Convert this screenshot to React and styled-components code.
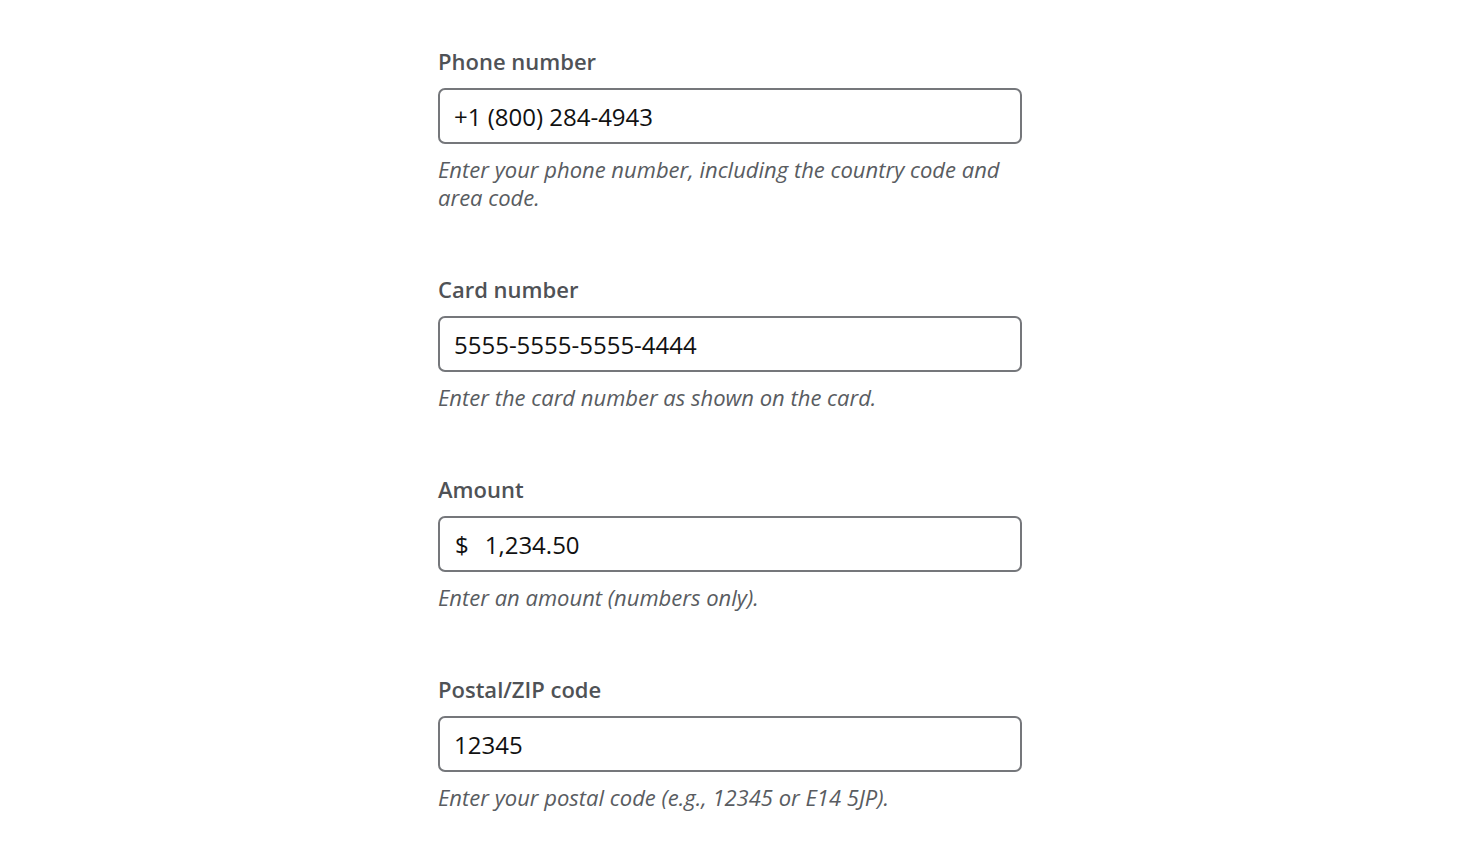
import React from "react";
import styled, { createGlobalStyle } from "styled-components";

const Global = createGlobalStyle`
  html, body { margin: 0; padding: 0; background: #ffffff; }
  body { font-family: "Open Sans", "Liberation Sans", sans-serif; }
  * { box-sizing: border-box; }
`;

const Page = styled.div`
  display: flex;
  justify-content: center;
  padding-top: 47px;
`;

const Form = styled.form`
  width: 584px;
  display: flex;
  flex-direction: column;
  gap: 64px;
`;

const Field = styled.div`
  display: flex;
  flex-direction: column;
`;

const Label = styled.label`
  font-size: 22px;
  line-height: 28px;
  font-weight: 600;
  color: #4f5256;
  margin-bottom: 13px;
`;

const InputBox = styled.div`
  display: flex;
  align-items: center;
  height: 56px;
  border: 2px solid #75777b;
  border-radius: 7px;
  padding: 0 14px;
  background: #fff;
`;

const Prefix = styled.span`
  font-size: 24px;
  color: #111;
  margin-right: 16px;
  padding-left: 1px;
`;

const Input = styled.input`
  flex: 1;
  border: none;
  outline: none;
  padding: 0;
  font-family: inherit;
  font-size: 24px;
  color: #111;
  background: transparent;
`;

const Hint = styled.p`
  margin: 11px 0 0;
  font-size: 22px;
  line-height: 28px;
  font-style: italic;
  color: #595c61;
`;

const fields = [
  { label: "Phone number", value: "+1 (800) 284-4943", hint: "Enter your phone number, including the country code and area code." },
  { label: "Card number", value: "5555-5555-5555-4444", hint: "Enter the card number as shown on the card." },
  { label: "Amount", value: "1,234.50", prefix: "$", hint: "Enter an amount (numbers only)." },
  { label: "Postal/ZIP code", value: "12345", hint: "Enter your postal code (e.g., 12345 or E14 5JP)." },
];

export default function App() {
  return (
    <>
      <Global />
      <Page>
        <Form onSubmit={(e) => e.preventDefault()}>
          {fields.map((f, i) => (
            <Field key={i}>
              <Label htmlFor={`f${i}`}>{f.label}</Label>
              <InputBox>
                {f.prefix && <Prefix>{f.prefix}</Prefix>}
                <Input id={`f${i}`} defaultValue={f.value} />
              </InputBox>
              <Hint>{f.hint}</Hint>
            </Field>
          ))}
        </Form>
      </Page>
    </>
  );
}
